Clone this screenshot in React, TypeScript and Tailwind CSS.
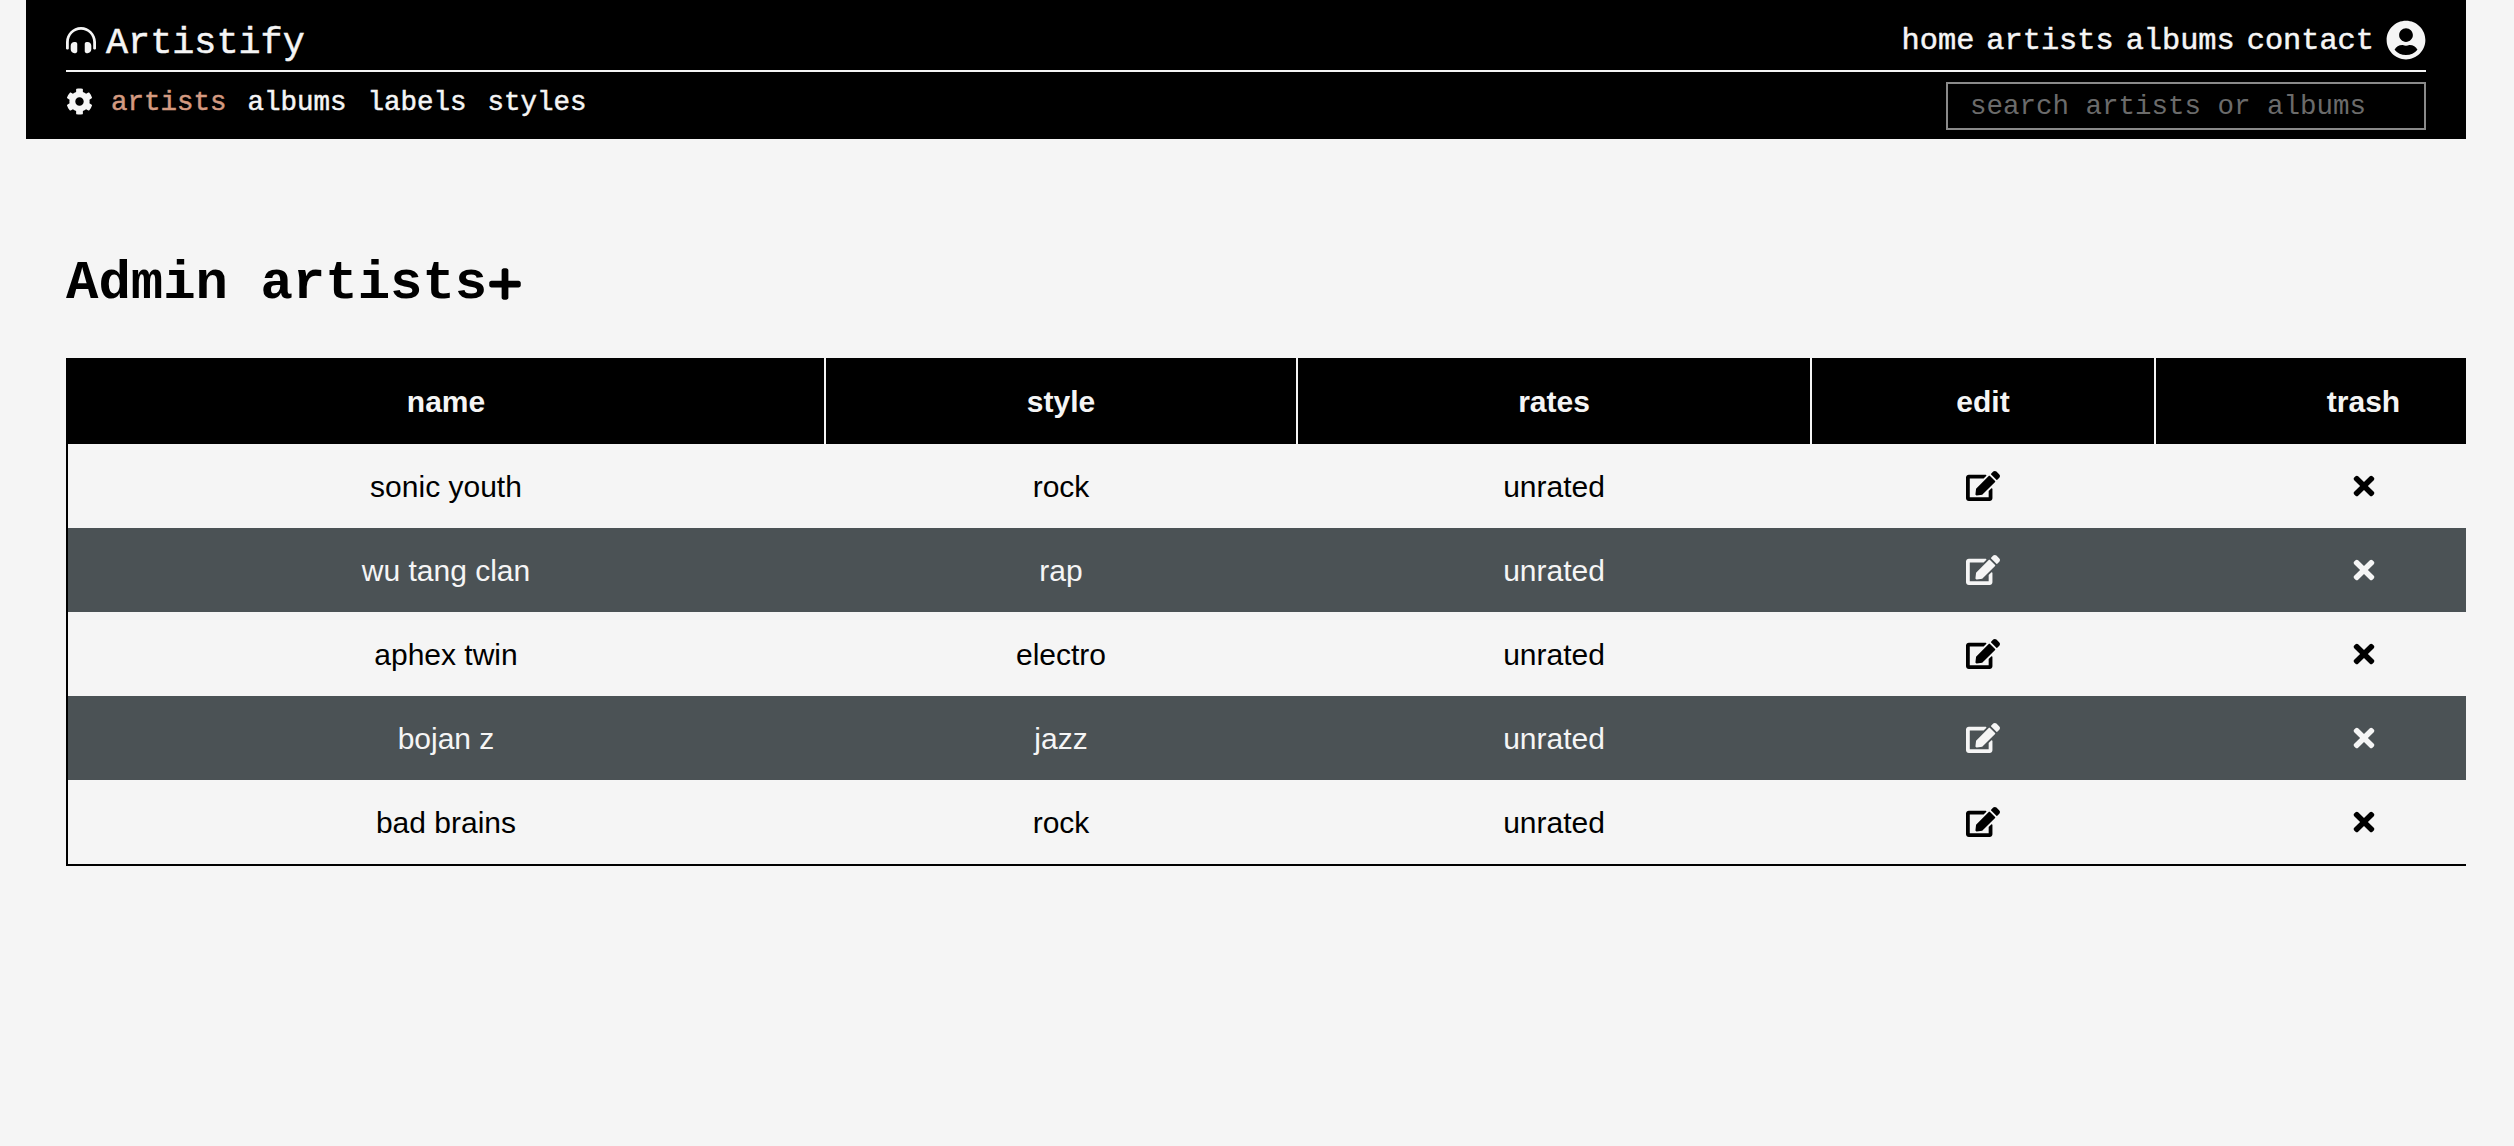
import { FaCog, FaEdit, FaHeadphonesAlt, FaPlus, FaTimes, FaUserCircle } from "react-icons/fa";

const MONO = "font-['Liberation_Mono',monospace]";

const ROWS = [
  { name: "sonic youth", style: "rock" },
  { name: "wu tang clan", style: "rap" },
  { name: "aphex twin", style: "electro" },
  { name: "bojan z", style: "jazz" },
  { name: "bad brains", style: "rock" },
];

const COLS = "grid grid-cols-[758px_472px_514px_344px_415px]";

function Header() {
  return (
    <header className={`mx-[26px] mr-[48px] h-[139px] bg-black px-10 pt-5 text-[#f5f5f5] ${MONO} [-webkit-text-stroke:0.5px]`}>
      {/* Top row */}
      <div className="border-b-2 border-[#f5f5f5] pb-[10px]">
        <div className="flex h-10 items-center justify-between">
          <div className="flex items-center gap-[10px]">
            <FaHeadphonesAlt className="text-[30px]" />
            <span className="pt-[7px] text-[36.8px]">Artistify</span>
          </div>
          <nav className="flex items-center gap-3 text-[30.3px]">
            <a className="pt-[4px]">home</a>
            <a className="pt-[4px]">artists</a>
            <a className="pt-[4px]">albums</a>
            <a className="pt-[4px]">contact</a>
            <FaUserCircle className="text-[40px]" />
          </nav>
        </div>
      </div>
      {/* Admin row */}
      <div className="flex justify-between">
        <div className="flex h-[62px] items-center gap-[21px] text-[27.5px]">
          <FaCog className="mr-[-3px] mb-[3px] text-[27px]" />
          <a className="text-[#d49a80]">artists</a>
          <a>albums</a>
          <a>labels</a>
          <a>styles</a>
        </div>
        <input
          className="mt-[10px] h-[48px] w-[480px] border-2 border-[#8a8a8a] bg-black px-[22px] text-[27.5px] [-webkit-text-stroke:0] placeholder:text-[#6b6b6b]"
          placeholder="search artists or albums"
        />
      </div>
    </header>
  );
}

export default function App() {
  return (
    <div className="min-h-[1146px] bg-[#f5f5f5] font-['Liberation_Sans',sans-serif] text-black">
      <Header />
      <main className="mr-[48px] overflow-hidden pl-[66px]">
        <h1 className={`flex items-center pt-[106px] pb-[36px] text-[54px] leading-[77px] font-bold ${MONO}`}>
          Admin artists
          <FaPlus className="text-[36px]" />
        </h1>
        <div className="border-b-2 border-l-2 border-black">
          <div className={`${COLS} -ml-[2px] h-[86px] bg-black pl-[2px] text-[30px] font-bold text-[#f5f5f5]`}>
            {["name", "style", "rates", "edit", "trash"].map((label, i) => (
              <div
                key={label}
                className={`flex items-center justify-center ${i < 4 ? "border-r-2 border-[#f5f5f5]" : ""}`}
              >
                {label}
              </div>
            ))}
          </div>
          {ROWS.map((row, i) => (
            <div
              key={row.name}
              className={`${COLS} h-[84px] text-[30px] ${i % 2 === 1 ? "bg-[#4b5255] text-[#f5f5f5]" : ""}`}
            >
              <div className="flex items-center justify-center border-r-2 border-transparent">{row.name}</div>
              <div className="flex items-center justify-center border-r-2 border-transparent">{row.style}</div>
              <div className="flex items-center justify-center border-r-2 border-transparent">unrated</div>
              <div className="flex items-center justify-center border-r-2 border-transparent">
                <FaEdit className="text-[34px]" />
              </div>
              <div className="flex items-center justify-center">
                <FaTimes className="text-[30px]" />
              </div>
            </div>
          ))}
        </div>
      </main>
    </div>
  );
}
